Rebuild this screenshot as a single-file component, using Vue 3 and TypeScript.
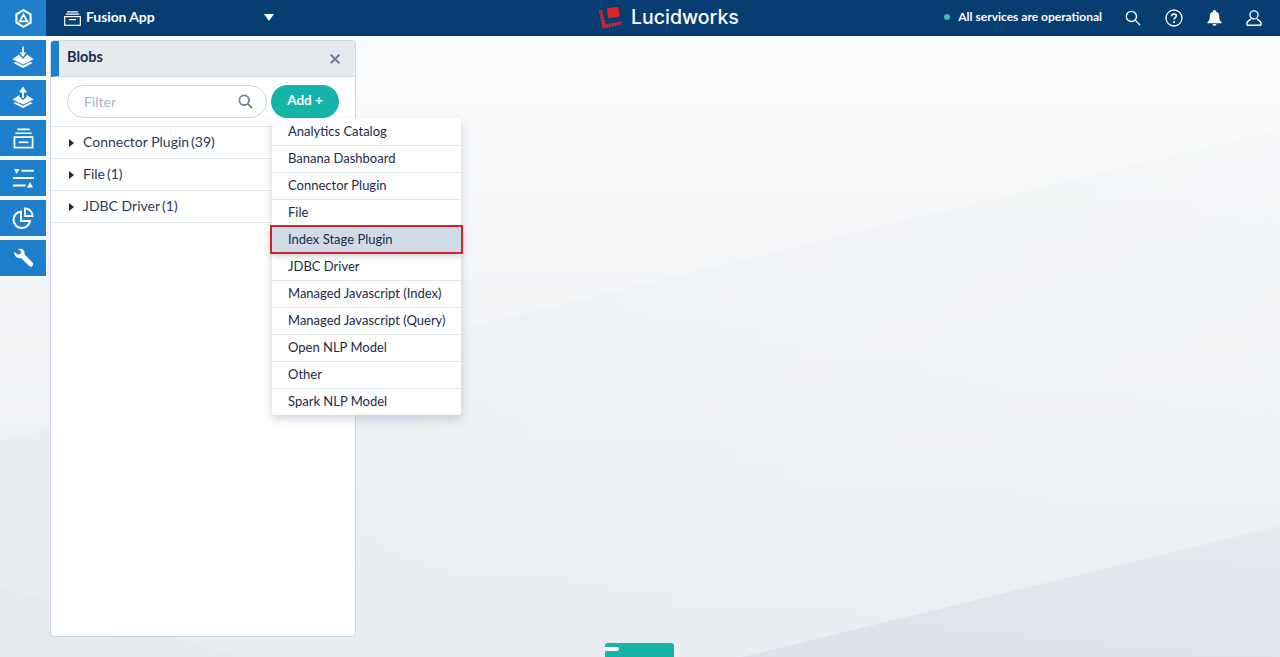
<script setup lang="ts">
const blobTypes = [
  { name: 'Connector Plugin', count: 39 },
  { name: 'File', count: 1 },
  { name: 'JDBC Driver', count: 1 }
]

const addOptions = [
  'Analytics Catalog',
  'Banana Dashboard',
  'Connector Plugin',
  'File',
  'Index Stage Plugin',
  'JDBC Driver',
  'Managed Javascript (Index)',
  'Managed Javascript (Query)',
  'Open NLP Model',
  'Other',
  'Spark NLP Model'
]

const highlighted = 'Index Stage Plugin'
</script>

<template>
  <div class="page">
    <!-- decorative page backdrop -->
    <svg class="backdrop" viewBox="0 0 1280 621" preserveAspectRatio="none">
      <defs>
        <linearGradient id="base" x1="0" y1="0" x2="0" y2="1">
          <stop offset="0" stop-color="#fbfcfd" />
          <stop offset="1" stop-color="#e9ecf0" />
        </linearGradient>
        <linearGradient id="band" x1="0" y1="0" x2="1" y2="0">
          <stop offset="0" stop-color="#e6eaef" stop-opacity="0.55" />
          <stop offset="1" stop-color="#eef2f5" stop-opacity="0.2" />
        </linearGradient>
        <linearGradient id="corner" x1="1" y1="0" x2="0.6" y2="1">
          <stop offset="0" stop-color="#e5eaef" />
          <stop offset="1" stop-color="#dde3ea" />
        </linearGradient>
      </defs>
      <rect width="1280" height="621" fill="url(#base)" />
      <polygon points="0,405 1280,93 1280,621 0,621" fill="url(#band)" />
      <polygon points="0,551 242,621 0,621" fill="#e5eaee" opacity="0.6" />
      <polygon points="742,621 1280,490 1280,621" fill="url(#corner)" />
    </svg>

    <header class="topbar">
      <div class="brand-tile">
        <svg width="17" height="19" viewBox="0 0 18 20" fill="none" stroke="#fff">
          <path d="M9 1.200 16.500 5.500V14.500L9 18.800 1.500 14.500V5.500Z" stroke-width="2.200" />
          <path d="M9 6 13 13H5Z" stroke-width="2" />
        </svg>
      </div>
      <div class="app-switch">
        <svg width="17" height="15" viewBox="0 0 17 15" fill="none" stroke="#fff" stroke-width="1.200">
          <path d="M3 .8H14M1.800 3.200H15.200" />
          <rect x=".7" y="5.600" width="15.600" height="8.700" />
          <path d="M5 8.600H12" />
        </svg>
        <span class="app-name">Fusion App</span>
        <span class="caret"></span>
      </div>
      <div class="logo">
        <svg width="24" height="22" viewBox="0 0 24 22">
          <rect x="9.500" y="0.500" width="11.500" height="10" fill="#d9252a" transform="rotate(-8 15 5)" />
          <path d="M2.500 3.500 6 19.500 23.500 16" fill="none" stroke="#d9252a" stroke-width="3.600" stroke-dasharray="2.400 .6" />
        </svg>
        <span class="logo-text">Lucidworks</span>
      </div>
      <div class="status">
        <span class="status-dot"></span>
        <span>All services are operational</span>
      </div>
      <div class="top-icons">
        <svg width="16" height="16" viewBox="0 0 18 18" fill="none" stroke="#fff" stroke-width="1.500">
          <circle cx="7.200" cy="7.200" r="5.700" />
          <path d="M11.400 11.400 17 17" />
        </svg>
        <svg width="18" height="18" viewBox="0 0 18 18" fill="none" stroke="#fff" stroke-width="1.300">
          <circle cx="9" cy="9" r="8" />
          <path d="M6.600 7.200C6.600 5.800 7.600 4.900 9 4.900 10.400 4.900 11.400 5.800 11.400 7 11.400 8.600 9 8.700 9 10.600" stroke-width="1.500" />
          <circle cx="9" cy="13" r="1" fill="#fff" stroke="none" />
        </svg>
        <svg width="15" height="16" viewBox="0 0 16 17" fill="#fff">
          <path d="M8 0C9 0 9.500.6 9.500 1.500 11.800 2.200 13 4 13 6.500 13 10 14 11.500 15.500 13V14H.5V13C2 11.500 3 10 3 6.500 3 4 4.200 2.200 6.500 1.500 6.500.6 7 0 8 0Z" />
          <path d="M6 15H10C10 16.200 9 17 8 17S6 16.200 6 15Z" />
        </svg>
        <svg width="16" height="16" viewBox="0 0 17 17" fill="none" stroke="#fff" stroke-width="1.400">
          <circle cx="8.500" cy="5.200" r="4.300" />
          <path d="M1 16.200V14.200C1 11.800 3.500 10.800 5.500 9.800M16 16.200V14.200C16 11.800 13.500 10.800 11.500 9.800M1 16.200H16" />
        </svg>
      </div>
    </header>

    <div class="workspace">
      <nav class="sidenav">
        <div class="nav-tile">
          <svg width="24" height="24" viewBox="0 0 24 24" fill="#fff">
            <path d="M11.200 .5H12.800V6.500H15.500L12 11 8.500 6.500H11.200Z" />
            <path d="M7.800 8.500 12 13 16.200 8.500 22.500 13.200 12 18.500 1.500 13.200Z" />
            <path d="M4.500 15.800 12 19.600 19.500 15.800 21.500 17 12 22 2.500 17Z" />
          </svg>
        </div>
        <div class="nav-tile">
          <svg width="24" height="24" viewBox="0 0 24 24" fill="#fff">
            <path d="M12 .5 16 6.500H13V12H11V6.500H8Z" />
            <path d="M8.500 9V11L12 14 15.500 11V9L22.500 13.500 12 18.500 1.500 13.500Z" />
            <path d="M4.500 16 12 19.800 19.500 16 21.500 17.200 12 22 2.500 17.200Z" />
          </svg>
        </div>
        <div class="nav-tile">
          <svg width="21" height="21" viewBox="0 0 22 21" fill="none" stroke="#fff" stroke-width="1.800">
            <path d="M4.500 1H17.500M2.500 5H19.500" />
            <rect x="1.500" y="9" width="19" height="11" />
            <path d="M6 14.500H16" />
          </svg>
        </div>
        <div class="nav-tile">
          <svg width="21" height="20" viewBox="0 0 21 20" fill="#fff">
            <path d="M1 1H6.500L3.700 6Z" />
            <path d="M8.500 2H21V3.500H8.500Z" stroke="#fff" stroke-width=".5" stroke-dasharray="1.500 .5" />
            <path d="M0 9H21V11H0Z" />
            <path d="M0 16.500H12.500V18.500H0Z" />
            <path d="M17 14 20 19.500H14Z" />
          </svg>
        </div>
        <div class="nav-tile">
          <svg width="22" height="22" viewBox="0 0 22 22" fill="none" stroke="#fff">
            <path d="M9 4.500A8.300 8.300 0 1 0 18 14H9Z" stroke-width="2" />
            <path d="M13 1.500A7.500 7.500 0 0 1 20.500 9H13Z" stroke-width="1.800" />
          </svg>
        </div>
        <div class="nav-tile">
          <svg width="21" height="20" viewBox="0 0 22 22" fill="#fff">
            <path d="M7 .8C10 .4 12.500 2.800 12.300 5.800L12.200 7.200 21 16.200C21.800 17.200 21.800 18.700 20.800 19.800 19.700 20.800 18.200 20.800 17.200 19.900L8.300 10.900C5 11.900 1.600 10 1 6.400 .8 5.600 .9 4.800 1.100 4L4.600 7.300 7.500 6.500 8.300 3.700 4.800 1.300C5.500 1 6.200 .9 7 .8Z" />
          </svg>
        </div>
      </nav>

      <section class="panel">
        <div class="panel-head">
          <span class="panel-title">Blobs</span>
          <svg class="panel-close" width="10" height="10" viewBox="0 0 10 10" stroke="#6f7f96" stroke-width="2">
            <path d="M.7 .7 9.300 9.300M9.300 .7 .7 9.300" />
          </svg>
        </div>
        <div class="panel-tools">
          <div class="filter">
            <span class="filter-label">Filter</span>
            <svg width="15" height="15" viewBox="0 0 15 15" fill="none" stroke="#6f8098" stroke-width="1.800">
              <circle cx="6.200" cy="6.200" r="4.800" />
              <path d="M9.800 9.800 14 14" />
            </svg>
          </div>
          <button class="add-btn" type="button">Add +</button>
        </div>
        <ul class="blob-list">
          <li v-for="blob in blobTypes" :key="blob.name" class="blob-row">
            <span class="blob-arrow"></span>
            <span>{{ blob.name }}</span>
            <span class="blob-count">({{ blob.count }})</span>
          </li>
        </ul>

        <ul class="add-menu">
          <li
            v-for="option in addOptions"
            :key="option"
            class="add-item"
            :class="{ active: option === highlighted }"
          >
            {{ option }}
          </li>
        </ul>
      </section>
    </div>

    <div class="bottom-tab"><span class="bottom-tab-mark"></span></div>
  </div>
</template>

<style>
html,
body {
  margin: 0;
  overflow: hidden;
}
</style>

<style scoped>
.page {
  position: relative;
  display: flex;
  flex-direction: column;
  height: 100vh;
  overflow: hidden;
  font-family: Lato, "Open Sans", sans-serif;
  color: #1c2a4a;
}

.backdrop {
  position: absolute;
  top: 36px;
  left: 0;
  width: 100%;
  height: calc(100% - 36px);
}

.topbar {
  position: relative;
  flex: none;
  display: flex;
  align-items: center;
  height: 36px;
  background: #083d72;
  color: #fff;
}

.brand-tile {
  display: flex;
  align-items: center;
  justify-content: center;
  width: 46px;
  height: 36px;
  background: #1e7fcc;
}

.app-switch {
  display: flex;
  align-items: center;
  width: 228px;
  padding-left: 18px;
  box-sizing: border-box;
}

.app-name {
  margin-left: 5px;
  padding-bottom: 4px;
  font-size: 14px;
  font-weight: 700;
  letter-spacing: -0.1px;
}

.caret {
  margin-left: auto;
  margin-bottom: 2px;
  border-left: 5px solid transparent;
  border-right: 5px solid transparent;
  border-top: 7px solid #fff;
}

.logo {
  display: flex;
  align-items: center;
  gap: 9px;
  margin-left: 324px;
}

.logo-text {
  padding-bottom: 2px;
  font-family: Inter, sans-serif;
  font-size: 19.500px;
  font-weight: 500;
}

.status {
  display: flex;
  align-items: center;
  gap: 8px;
  margin-left: auto;
  padding-bottom: 3px;
  font-size: 12px;
  font-weight: 700;
}

.status-dot {
  width: 6px;
  height: 6px;
  border-radius: 50%;
  background: #3fb8ad;
}

.top-icons {
  display: flex;
  align-items: center;
  gap: 24px;
  margin-left: 23px;
  margin-right: 18px;
  padding-bottom: 1px;
}

.workspace {
  position: relative;
  flex: 1;
  display: flex;
  gap: 4px;
  min-height: 0;
  padding: 4px 0 20px;
}

.sidenav {
  display: flex;
  flex-direction: column;
  gap: 4px;
  width: 46px;
}

.nav-tile {
  display: flex;
  align-items: center;
  justify-content: center;
  height: 36px;
  background: #1e7fcc;
}

.panel {
  position: relative;
  width: 306px;
  box-sizing: border-box;
  background: #fff;
  border: 1px solid #ced9e5;
  border-radius: 4px;
}

.panel-head {
  display: flex;
  align-items: center;
  justify-content: space-between;
  height: 35px;
  padding: 0 15px 0 8px;
  background: #e5eaee;
  border-left: 8px solid #1e7fcc;
  border-bottom: 1px solid #d3dde8;
  border-top-left-radius: 3px;
  border-top-right-radius: 3px;
}

.panel-title {
  padding-bottom: 4px;
  font-size: 14.500px;
  font-weight: 700;
}

.panel-tools {
  display: flex;
  align-items: flex-start;
  gap: 4px;
  height: 50px;
  padding: 8px 0 0 16px;
  box-sizing: border-box;
  border-bottom: 1px solid #e1e7ee;
}

.filter {
  display: flex;
  align-items: center;
  justify-content: space-between;
  width: 200px;
  height: 33px;
  padding: 0 13px 0 16px;
  box-sizing: border-box;
  border: 1px solid #c9d2de;
  border-radius: 17px;
  background: #fff;
}

.filter-label {
  font-size: 14px;
  color: #aab4c3;
}

.add-btn {
  width: 68px;
  height: 33px;
  padding: 0 0 4px;
  border: 0;
  border-radius: 17px;
  background: #14b5a8;
  color: #fff;
  font-family: inherit;
  font-size: 13.500px;
  font-weight: 700;
}

.blob-list {
  margin: 0;
  padding: 0;
  list-style: none;
}

.blob-row {
  display: flex;
  align-items: center;
  box-sizing: border-box;
  height: 32px;
  padding: 0 0 2px 18px;
  border-bottom: 1px solid #e1e7ee;
  font-size: 14px;
  color: #2b3955;
}

.blob-arrow {
  margin: 2px 9px 0 0;
  border-top: 4px solid transparent;
  border-bottom: 4px solid transparent;
  border-left: 5px solid #1c2a4a;
}

.blob-count {
  margin-left: 2px;
}

.add-menu {
  position: absolute;
  top: 77px;
  left: 221px;
  width: 189px;
  margin: 0;
  padding: 1px 0 0;
  list-style: none;
  background: #fff;
  border-radius: 3px;
  box-shadow: 0 4px 10px rgba(70, 90, 120, 0.25);
}

.add-item {
  display: flex;
  align-items: center;
  box-sizing: border-box;
  height: 27px;
  padding: 0 0 2px 16px;
  border-bottom: 1px solid #e1e7ee;
  font-size: 13px;
  color: #1c2a4a;
}

.add-item:last-child {
  height: 26px;
  border-bottom: 0;
}

.add-item.active {
  position: relative;
  background: #cfdce8;
  box-shadow: 0 2px 6px rgba(70, 90, 120, 0.3);
}

.add-item.active::after {
  content: "";
  position: absolute;
  top: -2px;
  right: -2px;
  bottom: -1px;
  left: -2px;
  border: 2px solid #d3222a;
}

.bottom-tab {
  position: absolute;
  left: 605px;
  bottom: 0;
  width: 69px;
  height: 14px;
  background: #14b5a8;
  border-radius: 3px 3px 0 0;
}

.bottom-tab-mark {
  position: absolute;
  top: 4px;
  left: 0;
  width: 14px;
  height: 4px;
  background: #fff;
  border-radius: 0 2px 2px 0;
}
</style>
